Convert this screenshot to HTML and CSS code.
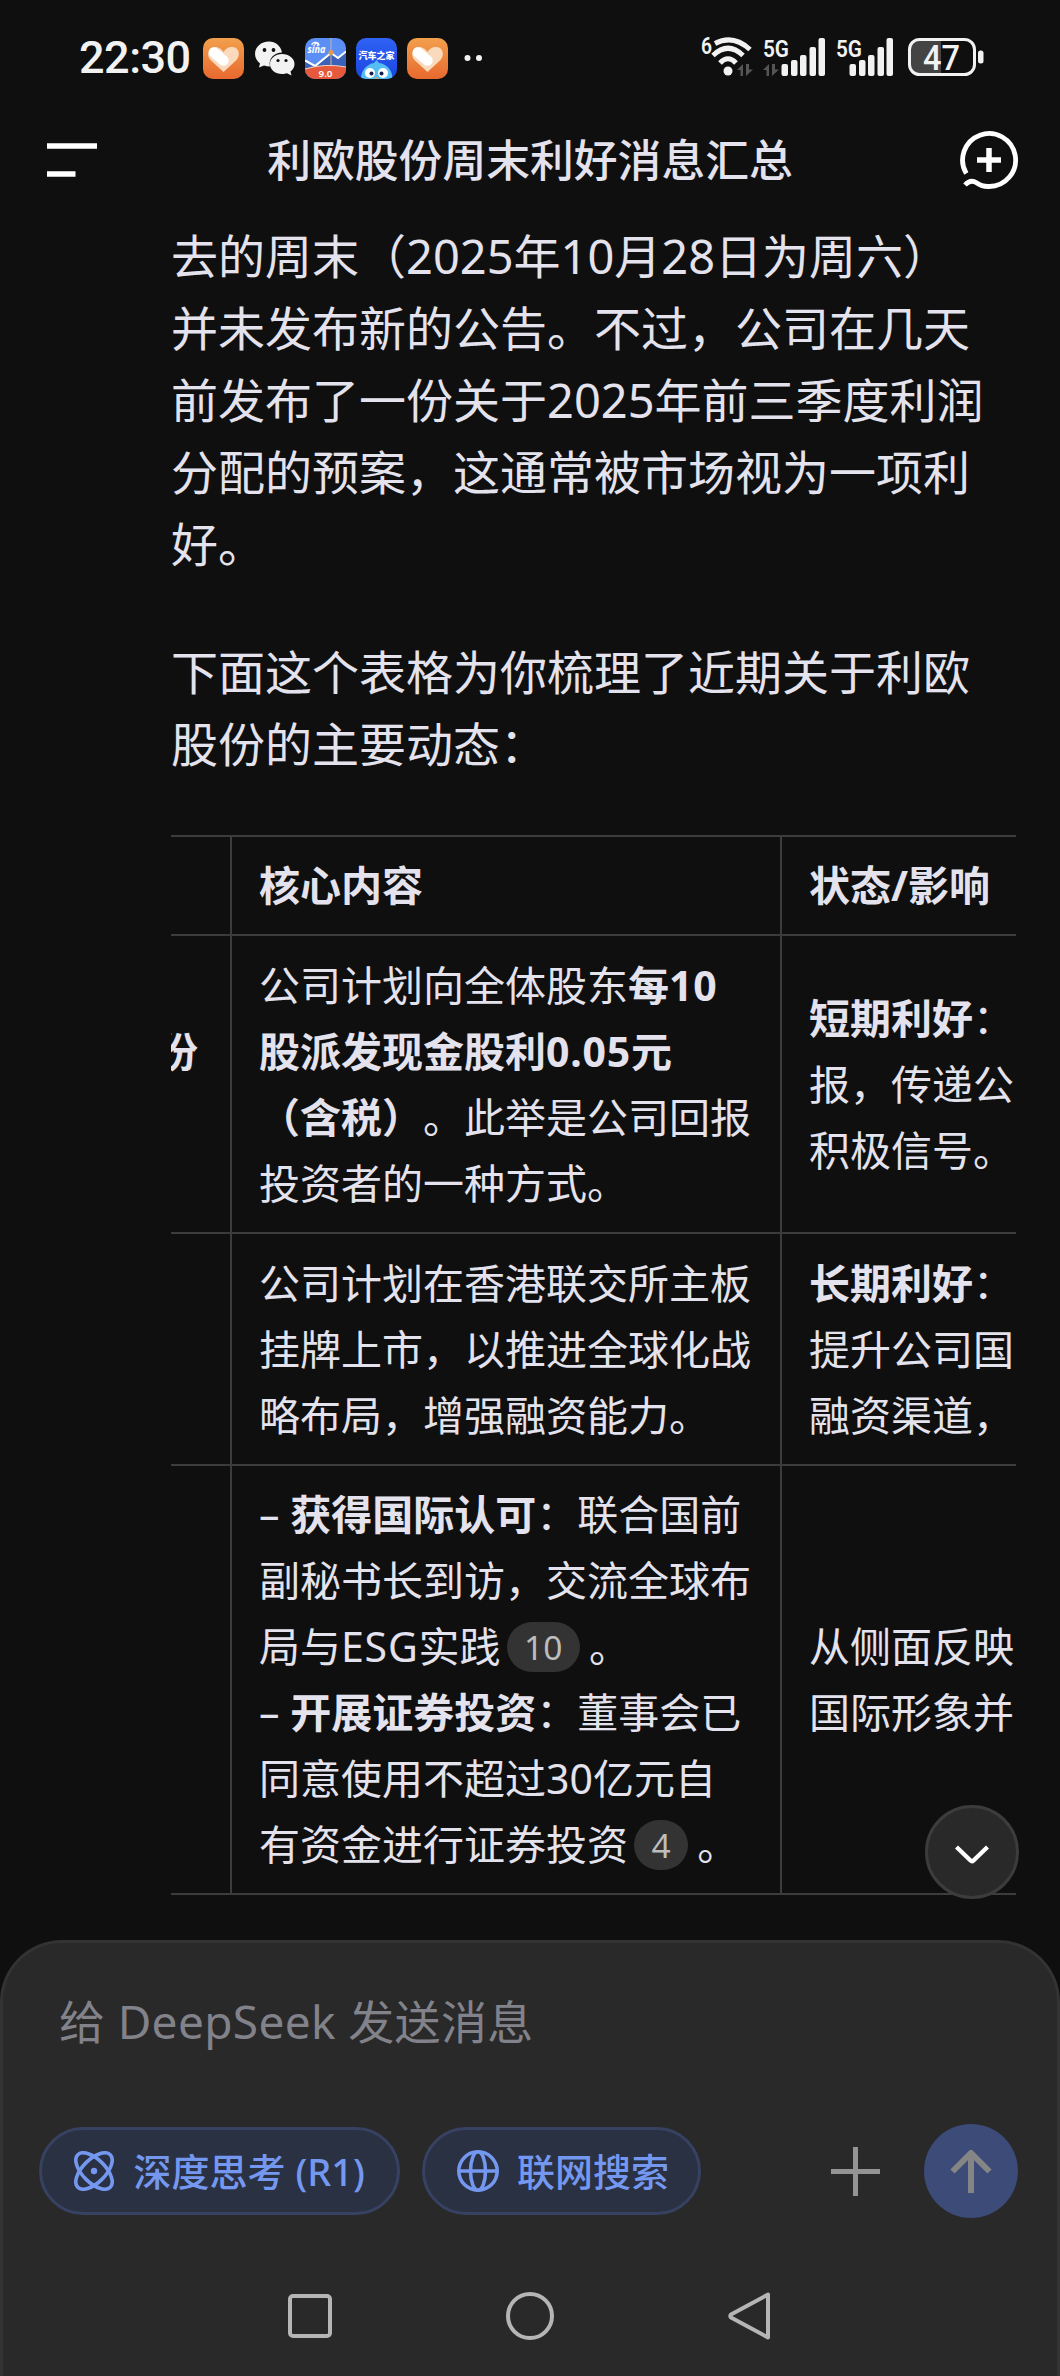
FILE: index.html
```html
<!DOCTYPE html>
<html lang="zh-CN">
<head>
<meta charset="utf-8">
<title>利欧股份周末利好消息汇总</title>
<link rel="stylesheet" href="styles.css">
</head>
<body>
<svg width="0" height="0" class="defs">
  <defs>
    <linearGradient id="orange" x1="0" y1="0" x2="0" y2="1"><stop offset="0" stop-color="#f2a04d"/><stop offset="1" stop-color="#e8692f"/></linearGradient>
    <linearGradient id="blue" x1="0" y1="0" x2="0" y2="1"><stop offset="0" stop-color="#2f62f5"/><stop offset="1" stop-color="#1a45e0"/></linearGradient>
    <symbol id="heart" viewBox="0 0 41 41">
      <rect width="41" height="41" rx="10" fill="url(#orange)"/>
      <path d="M20.5 34 L7.5 22 C3 17 5 9 12 9 C16 9 19 11.500 20.500 14 C23 10 26 9 29 9 C36 9 38 17 33.500 22 Z" fill="#fbd9bd"/>
      <path d="M11 14.500 L20.500 22.500" stroke="#fff" stroke-width="10.500" stroke-linecap="round"/>
    </symbol>
    <symbol id="updown" viewBox="0 0 16 12"><path d="M0 6 L6 0 V12 H3.500 V6 Z M9 0 V12 L16 5.500 H12 V0 Z" fill="#555"/></symbol>
  </defs>
</svg>
<div class="phone">
  <header class="status">
    <span class="clock">22:30</span>
    <div class="apps">
      <svg width="41" height="41"><use href="#heart"/></svg>
      <svg width="41" height="41" viewBox="0 0 41 41">
        <path d="M15 3.500 C7 3.500 1 9 1 16 C1 20 3 23 6 25.500 L5 29.500 L10 27.500 C12 28.200 14 28.400 16 28.400 C14 20 21 14.500 28 14.500 C27 8 21.500 3.500 15 3.500 Z" fill="#f2f2f2"/>
        <path d="M28 16 C21 16 16 20.500 16 26 C16 32 21.500 36 28 36 C30 36 31.500 35.700 33 35.200 L37.500 37.500 L36.500 33.500 C39 31.500 40.500 29 40.500 26 C40.500 20.500 35 16 28 16 Z" fill="#f2f2f2"/>
        <g fill="#0f0f0f"><circle cx="10.500" cy="12" r="1.900"/><circle cx="19.500" cy="12" r="1.900"/><circle cx="24" cy="22.500" r="1.600"/><circle cx="32" cy="22.500" r="1.600"/></g>
      </svg>
      <svg width="41" height="41" viewBox="0 0 41 41">
        <clipPath id="c1"><rect width="41" height="41" rx="10"/></clipPath>
        <g clip-path="url(#c1)">
          <rect width="41" height="41" fill="#5c8ff5"/>
          <path d="M0 23 L11 29 L26 14 L33 20 L41 14 V41 H0 Z" fill="#3b62b8"/>
          <path d="M0 22.500 L10 28 L26 15 L33 20 L41 13.500" fill="none" stroke="#fff" stroke-width="2"/>
          <path d="M26 0 V30" stroke="#c8b39a" stroke-width="1"/>
          <circle cx="26" cy="14.500" r="2.500" fill="#e59a4a"/>
          <path d="M0 31 Q20 25 41 29 V41 H0 Z" fill="#e6593c"/>
          <path d="M0 31 Q20 25 41 29" fill="none" stroke="#f4d3c0"/>
          <path d="M7 7 C7 3.500 14 3.500 14 7.500 M10 7 A1.500 1.500 0 1 1 12 8" fill="none" stroke="#fff" stroke-width="1.300"/>
        </g>
        <text x="2.500" y="14.500" class="sina" textLength="18" lengthAdjust="spacingAndGlyphs">sina</text>
        <text x="20.500" y="38.500" class="ver" textLength="14" lengthAdjust="spacingAndGlyphs">9.0</text>
      </svg>
      <svg width="41" height="41" viewBox="0 0 41 41">
        <clipPath id="c2"><rect width="41" height="41" rx="10"/></clipPath>
        <g clip-path="url(#c2)">
          <rect width="41" height="41" fill="url(#blue)"/>
          <path d="M5 41 C5 32 11 26 18 25 L20.500 22 L23 25 C31 26 36.500 32 36.500 41 Z" fill="#55bdf2"/>
          <circle cx="14" cy="35" r="5" fill="#fff"/><circle cx="27" cy="35" r="5" fill="#fff"/>
          <circle cx="15.500" cy="35.500" r="2" fill="#14204a"/><circle cx="25.500" cy="35.500" r="2" fill="#14204a"/>
          <path d="M18 40.500 Q20.500 37.500 23 40.500" fill="#f5a13c"/>
        </g>
        <text x="20.500" y="20.500" class="auto">汽车之家</text>
      </svg>
      <svg width="41" height="41"><use href="#heart"/></svg>
    </div>
    <svg class="more" width="18" height="8"><circle cx="3.500" cy="4" r="3"/><circle cx="15" cy="4" r="3"/></svg>
    <svg class="signals" width="304" height="60" viewBox="0 -8 304 60">
      <text x="0" y="17.500" class="six" textLength="11" lengthAdjust="spacingAndGlyphs">6</text>
      <g fill="none" stroke="#f2f2f2" stroke-width="5" stroke-linecap="butt">
        <path d="M14 7.500 Q32 -2 49 13.500"/><path d="M12 19.500 Q27 5 42 19.500"/><path d="M19 27 Q27 18.500 35 27"/>
      </g>
      <circle cx="27" cy="35" r="4.500" fill="#f2f2f2"/>
      <use href="#updown" x="36" y="28" width="16" height="12"/>
      <text x="62" y="20.500" class="net" textLength="26" lengthAdjust="spacingAndGlyphs">5G</text>
      <use href="#updown" x="62" y="28" width="16" height="12"/>
      <g fill="#f2f2f2">
        <rect x="80.500" y="28" width="6.500" height="12" rx="2"/><rect x="90" y="24" width="6.500" height="16" rx="2"/><rect x="99" y="19" width="6.500" height="21" rx="2"/><rect x="108.500" y="11" width="6.500" height="29" rx="2"/><rect x="117.500" y="2" width="6.500" height="38" rx="2"/>
        <rect x="148.500" y="28" width="6.500" height="12" rx="2"/><rect x="158" y="24" width="6.500" height="16" rx="2"/><rect x="167" y="19" width="6.500" height="21" rx="2"/><rect x="176.500" y="11" width="6.500" height="29" rx="2"/><rect x="185.500" y="2" width="6.500" height="38" rx="2"/>
      </g>
      <text x="135" y="20.500" class="net" textLength="26" lengthAdjust="spacingAndGlyphs">5G</text>
      <path d="M219 4 H240 V38 H219 Q209 38 209 28 V14 Q209 4 219 4 Z" fill="#444"/>
      <rect x="208.500" y="3.500" width="65" height="35" rx="10" fill="none" stroke="#f2f2f2" stroke-width="3"/>
      <rect x="277" y="14.500" width="5.500" height="13" rx="2.500" fill="#f2f2f2"/>
      <text x="222" y="33.500" class="battery" textLength="37" lengthAdjust="spacingAndGlyphs">47</text>
    </svg>
  </header>

  <nav class="topbar">
    <svg width="50" height="36" viewBox="0 0 50 36"><path d="M0 4 H50 M0 32 H28.500" stroke="#fff" stroke-width="5.500"/></svg>
    <h1>利欧股份周末利好消息汇总</h1>
    <svg width="60" height="60" viewBox="0 0 60 60" fill="none" stroke="#fff" stroke-width="4.800">
      <path d="M7.300 43.500 A26.500 26.500 0 1 1 30 56.500 Q23 56.800 17.500 52.800 Q11.500 49 6 55"/>
      <path d="M30 18 V42 M18 30 H42" stroke-width="5.500"/>
    </svg>
  </nav>

  <main class="message">
    <p>去的周末（2025年10月28日为周六）<br>并未发布新的公告。不过，公司在几天<br>前发布了一份关于2025年前三季度利润<br>分配的预案，这通常被市场视为一项利<br>好。</p>
    <p>下面这个表格为你梳理了近期关于利欧<br>股份的主要动态：</p>
    <div class="table">
      <div class="row">
        <div class="cell first"></div>
        <div class="cell core"><b>核心内容</b></div>
        <div class="cell"><b>状态/影响</b></div>
      </div>
      <div class="row mid">
        <div class="cell first"><b>份<br>&nbsp;</b></div>
        <div class="cell core">公司计划向全体股东<b>每<span class="wide">10</span><br>股派发现金股利<span class="wide">0.05</span>元<br>（含税）</b>。此举是公司回报<br>投资者的一种方式。</div>
        <div class="cell"><b>短期利好</b>：<br>报，传递公<br>积极信号。</div>
      </div>
      <div class="row mid">
        <div class="cell first"></div>
        <div class="cell core">公司计划在香港联交所主板<br>挂牌上市，以推进全球化战<br>略布局，增强融资能力。</div>
        <div class="cell"><b>长期利好</b>：<br>提升公司国<br>融资渠道，</div>
      </div>
      <div class="row">
        <div class="cell first"></div>
        <div class="cell core">– <b>获得国际认可</b>：联合国前<br>副秘书长到访，交流全球布<br>局与<span class="wide">ESG</span>实践<span class="cite">10</span>。<br>– <b>开展证券投资</b>：董事会已<br>同意使用不超过30亿元自<br>有资金进行证券投资<span class="cite">4</span>。</div>
        <div class="cell">从侧面反映<br>国际形象并</div>
      </div>
    </div>
    <button class="down" aria-label="滚动到底部"><svg width="34" height="20" viewBox="0 0 34 20"><path d="M1.500 2 L15.500 15.500 Q17 17 18.500 15.500 L32.500 2" fill="none" stroke="#fff" stroke-width="4.300"/></svg></button>
  </main>

  <footer class="composer">
    <div class="placeholder">给 DeepSeek 发送消息</div>
    <div class="tools">
      <div class="chip think">
        <svg width="40" height="40" viewBox="0 0 40 40" fill="none" stroke="#7498f0" stroke-width="3.600">
          <ellipse cx="20" cy="20" rx="23" ry="11.500" transform="rotate(45 20 20)"/><ellipse cx="20" cy="20" rx="23" ry="11.500" transform="rotate(-45 20 20)"/>
          <circle cx="20" cy="20" r="3.200" fill="#7498f0" stroke="none"/>
        </svg>
        <span>深度思考 (R1)</span>
      </div>
      <div class="chip search">
        <svg width="42" height="42" viewBox="0 0 42 42" fill="none" stroke="#7498f0" stroke-width="3.600">
          <circle cx="21" cy="21" r="19.200"/><ellipse cx="21" cy="21" rx="7.500" ry="19.200"/><path d="M2 21 H40"/>
        </svg>
        <span>联网搜索</span>
      </div>
      <svg class="plus" width="49" height="49" viewBox="0 0 49 49"><path d="M24.500 0 V49 M0 24.500 H49" stroke="#949494" stroke-width="5"/></svg>
      <div class="send"><svg width="42" height="43" viewBox="0 0 42 43"><path d="M21 43 V3 M2.500 21.500 L21 3 L39.500 21.500" fill="none" stroke="#858585" stroke-width="6"/></svg></div>
    </div>
    <div class="sysnav">
      <svg width="44" height="44" viewBox="0 0 44 44"><rect x="2" y="2" width="40" height="40" rx="3"/></svg>
      <svg width="48" height="48" viewBox="0 0 48 48"><circle cx="24" cy="24" r="22"/></svg>
      <svg width="42" height="48" viewBox="0 0 42 48"><path d="M40 2.500 V45.500 L3 25.500 Q1.500 24 3 22.500 Z" stroke-linejoin="round"/></svg>
    </div>
  </footer>
</div>
</body>
</html>
```
FILE: styles.css
```css
* { box-sizing: border-box; }
body { margin: 0; background: #0f0f0f; color: #e3e2ed; font-family: "Noto Sans", "Noto Sans CJK SC", sans-serif; text-spacing-trim: space-all; }
svg { display: block; flex: none; }
.defs { position: absolute; }
.phone { width: 1060px; height: 2376px; display: flex; flex-direction: column; overflow: hidden; }

.status { height: 110px; padding: 6px 0 0 79px; display: flex; align-items: center; flex: none; color: #f2f2f2; }
.clock { width: 124px; font: 500 45px/60px Roboto, sans-serif; letter-spacing: -0.5px; white-space: nowrap; }
.apps { display: flex; gap: 10px; }
.more { margin-left: 16px; fill: #f2f2f2; }
.signals { margin-left: 219px; overflow: visible; }
.signals text { fill: #f2f2f2; font-family: Roboto, sans-serif; font-weight: 600; }
.signals .six { font-size: 23px; }
.signals .net { font-size: 24px; }
.signals .battery { font-size: 35px; font-weight: 500; }
.sina { font: italic 700 10px "Noto Sans"; fill: #fff; }
.ver { font: 600 8px "Noto Sans"; fill: #fff; text-anchor: middle; }
.auto { font: 900 9px "Noto Sans CJK SC"; fill: #fff; text-anchor: middle; }

.topbar { height: 100px; flex: none; padding: 0 41px 0 47px; display: flex; justify-content: space-between; align-items: center; }
.topbar h1 { margin: -1px 0 0; font-size: 43.800px; line-height: 60px; font-weight: 500; padding-left: 4px; }

.message { height: 1730px; flex: none; padding: 10px 44px 0 171px; position: relative; }
.message p { margin: 0 0 56px; font-size: 47px; line-height: 72px; white-space: nowrap; }
.message p + p { margin-bottom: 55px; }
.table { border-top: 2px solid #3c3c3c; overflow: hidden; font-size: 41px; line-height: 66px; white-space: nowrap; }
.row { display: grid; grid-template-columns: 61px 550px 234px; border-bottom: 2px solid #3c3c3c; }
.cell { padding: 15px 0 16px 27px; align-content: center; overflow: hidden; }
.mid .cell { padding-top: 16px; }
.row .first { padding-left: 0; padding-right: 32px; display: flex; justify-content: flex-end; align-items: center; }
.first, .core { border-right: 2px solid #3c3c3c; }
.wide { letter-spacing: 0.800px; }
.cite { display: inline-block; height: 50px; padding: 0 17.500px; margin: 0 9px 0 6px; border-radius: 25px; background: #333; color: #bdbdbd; font-size: 33.500px; line-height: 50px; vertical-align: 2px; }
.down { position: absolute; right: 41px; top: 1595px; width: 94px; height: 94px; padding: 5px 0 0; border-radius: 50%; border: 3px solid #3c3c3c; background: #292929; display: flex; align-items: center; justify-content: center; }

.composer { flex: 1; background: #292929; border: 3px solid #333; border-bottom: 0; border-radius: 62px 62px 0 0; padding: 42px 39px 0 36px; display: flex; flex-direction: column; }
.placeholder { color: #82828a; font-size: 46px; line-height: 72px; letter-spacing: 0.350px; padding-left: 20px; white-space: nowrap; }
.tools { display: flex; align-items: center; height: 96px; margin-top: 66px; }
.chip { height: 88px; border: 3px solid #374262; border-radius: 44px; background: #2a3142; color: #7498f0; display: flex; align-items: center; gap: 19.500px; padding-left: 32px; font-size: 38px; font-weight: 500; white-space: nowrap; }
.chip span { margin-top: -3px; }
.think { width: 361px; }
.search { width: 279px; margin-left: 22px; gap: 18px; }
.plus { margin-left: 130px; }
.send { width: 94px; height: 94px; margin-left: 44px; border-radius: 50%; background: #3c4b77; display: flex; align-items: center; justify-content: center; }
.sysnav { display: flex; justify-content: center; align-items: center; gap: 174px; margin-top: 71px; height: 52px; fill: none; stroke: #b5b5b5; stroke-width: 4; }
```
